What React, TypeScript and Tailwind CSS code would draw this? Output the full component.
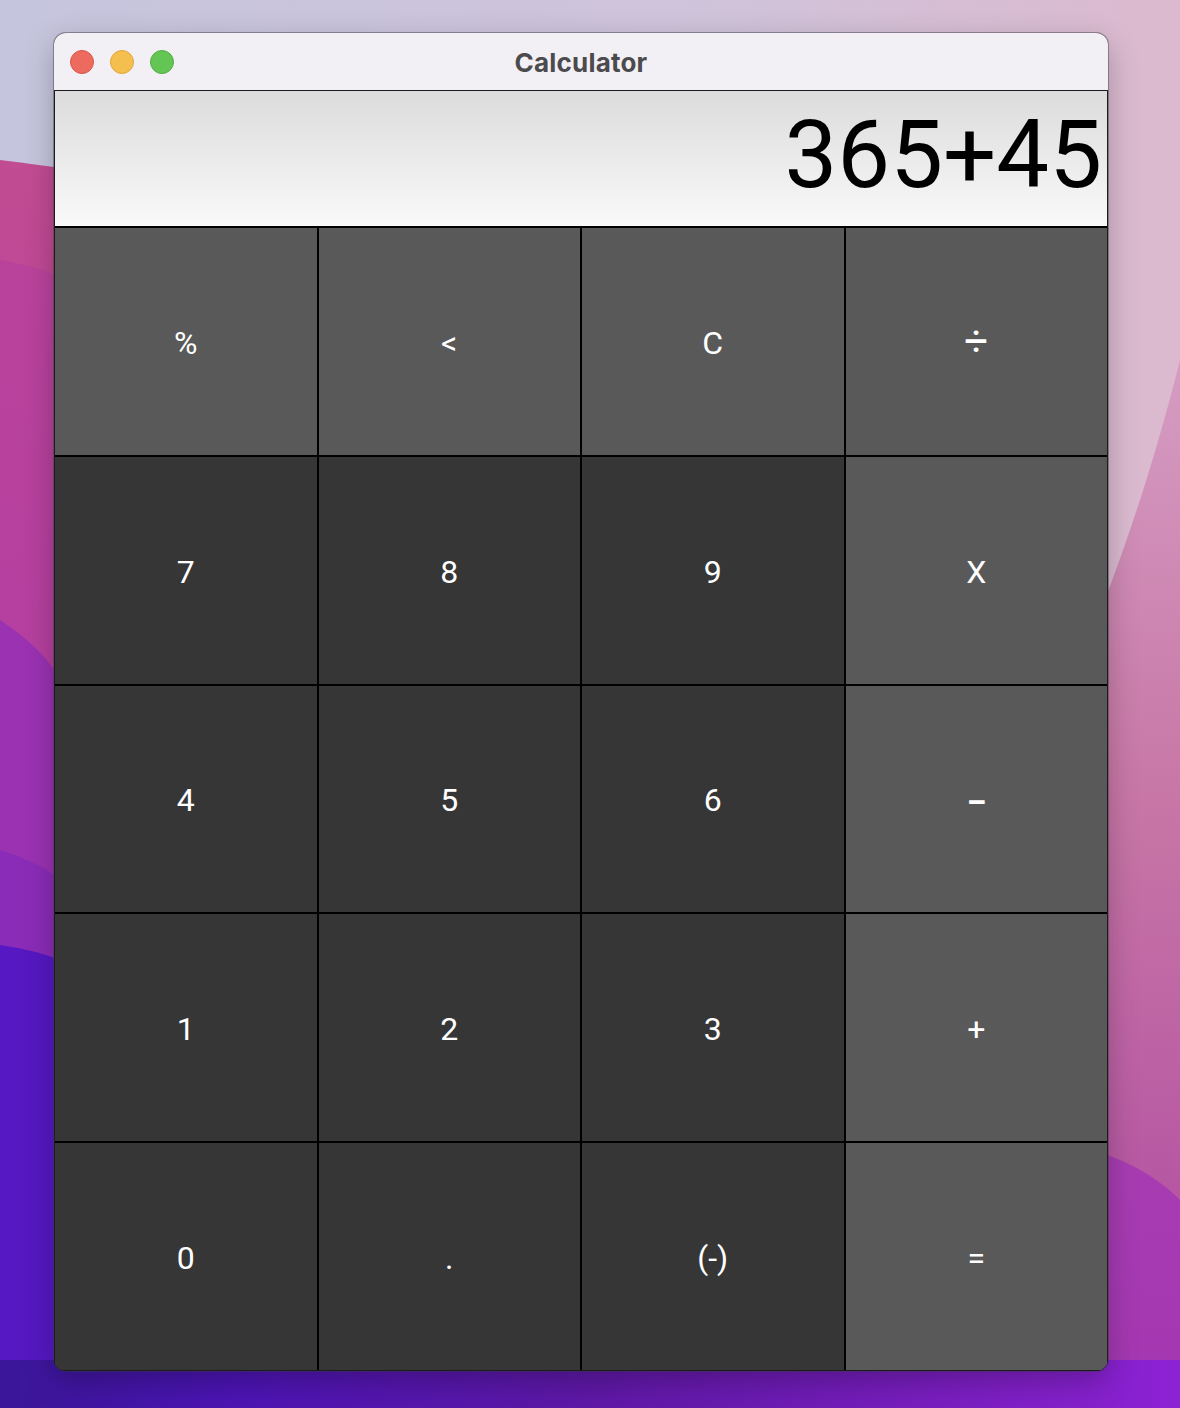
import React from 'react'

const keys: { label: string; tone: 'light' | 'dark'; size?: string }[] = [
  { label: '%', tone: 'light' },
  { label: '<', tone: 'light' },
  { label: 'C', tone: 'light' },
  { label: '÷', tone: 'light', size: 'text-[42px]' },
  { label: '7', tone: 'dark' },
  { label: '8', tone: 'dark' },
  { label: '9', tone: 'dark' },
  { label: 'X', tone: 'light' },
  { label: '4', tone: 'dark' },
  { label: '5', tone: 'dark' },
  { label: '6', tone: 'dark' },
  { label: '–', tone: 'light', size: 'text-[30px] font-black pt-[6px]' },
  { label: '1', tone: 'dark' },
  { label: '2', tone: 'dark' },
  { label: '3', tone: 'dark' },
  { label: '+', tone: 'light' },
  { label: '0', tone: 'dark' },
  { label: '.', tone: 'dark' },
  { label: '(-)', tone: 'dark' },
  { label: '=', tone: 'light' },
]

function Wallpaper() {
  return (
    <svg className="absolute inset-0" width="1180" height="1408" viewBox="0 0 1180 1408">
      <defs>
        <linearGradient id="sky" x1="0" y1="0" x2="1" y2="0">
          <stop offset="0" stopColor="#c5c5dd" />
          <stop offset="0.6" stopColor="#cfc3da" />
          <stop offset="1" stopColor="#dcb9cf" />
        </linearGradient>
        <linearGradient id="pink" x1="0" y1="0" x2="0" y2="1">
          <stop offset="0" stopColor="#c24c92" />
          <stop offset="0.5" stopColor="#b03ea2" />
          <stop offset="1" stopColor="#9c34ae" />
        </linearGradient>
        <linearGradient id="floor" x1="0" y1="0" x2="1" y2="0">
          <stop offset="0" stopColor="#3a1698" />
          <stop offset="0.2" stopColor="#4c14b4" />
          <stop offset="0.5" stopColor="#5e18a6" />
          <stop offset="0.8" stopColor="#7a1ec0" />
          <stop offset="1" stopColor="#8c22d4" />
        </linearGradient>
        <linearGradient id="rightpink" x1="0" y1="0" x2="0" y2="1">
          <stop offset="0" stopColor="#d59cc2" />
          <stop offset="0.4" stopColor="#c878a6" />
          <stop offset="1" stopColor="#ae46a2" />
        </linearGradient>
      </defs>
      <rect width="1180" height="1408" fill="url(#sky)" />
      <path d="M1180 360 C1150 480 1120 560 1090 640 L1090 1408 L1180 1408 Z" fill="url(#rightpink)" />
      <path d="M0 160 C120 175 220 190 300 215 L300 1408 L0 1408 Z" fill="url(#pink)" />
      <path d="M0 260 C30 265 50 272 60 278 L60 1408 L0 1408 Z" fill="#b640a0" opacity="0.6" />
      <path d="M0 620 C30 640 50 660 60 680 L60 1408 L0 1408 Z" fill="#9a32b2" />
      <path d="M0 850 C30 860 50 870 60 880 L60 1408 L0 1408 Z" fill="#8a2cb8" />
      <path d="M0 945 C20 948 40 952 60 960 L60 1408 L0 1408 Z" fill="#5518c2" />
      <path d="M1090 1150 C1130 1160 1160 1180 1180 1200 L1180 1408 L1090 1408 Z" fill="#a030b8" opacity="0.7" />
      <rect x="0" y="1360" width="1180" height="48" fill="url(#floor)" />
    </svg>
  )
}

export default function App() {
  return (
    <div className="relative w-[1180px] h-[1408px] overflow-hidden" style={{ fontFamily: 'Roboto, "Liberation Sans", sans-serif' }}>
      <Wallpaper />
      <div className="relative pt-[33px] pl-[54px]">
        <div className="w-[1054px] h-[1338px] rounded-[12px] overflow-hidden flex flex-col bg-[#1a1a1a] shadow-[0_0_0_1px_rgba(60,60,70,0.45),0_10px_30px_rgba(0,0,0,0.25)]">
          <div className="h-[58px] shrink-0 bg-[#f3f0f5] border-b border-[#1c1c1c] relative flex items-center justify-center">
            <div className="absolute left-[16px] top-[17px] flex gap-[16px]">
              <span className="w-[24px] h-[24px] rounded-full bg-[#ed6a5e] border border-[#d9564b]" />
              <span className="w-[24px] h-[24px] rounded-full bg-[#f5bf4f] border border-[#dfa63a]" />
              <span className="w-[24px] h-[24px] rounded-full bg-[#62c554] border border-[#52ad45]" />
            </div>
            <span className="text-[26px] font-bold text-[#4b4a4d] tracking-[0.2px] pt-[2px]" style={{ fontFamily: 'Inter, "Noto Sans", sans-serif' }}>
              Calculator
            </span>
          </div>
          <div className="flex-1 flex flex-col border-x border-b border-[#1c1c1c]">
            <div className="h-[135px] shrink-0 bg-gradient-to-b from-[#dcdcdc] to-[#f9f9f9] flex items-center justify-end pr-[5px] pb-[8px]">
              <span className="text-[94px] leading-none text-black">365+45</span>
            </div>
            <div className="flex-1 grid grid-cols-4 grid-rows-5 gap-[2px] bg-black border-t-2 border-black">
              {keys.map((k, i) => (
                <button
                  key={i}
                  className={`flex items-center justify-center text-white ${k.size ?? 'text-[32px] pt-[3px]'} ${k.tone === 'light' ? 'bg-[#595959]' : 'bg-[#363636]'}`}
                >
                  {k.label}
                </button>
              ))}
            </div>
          </div>
        </div>
      </div>
    </div>
  )
}
